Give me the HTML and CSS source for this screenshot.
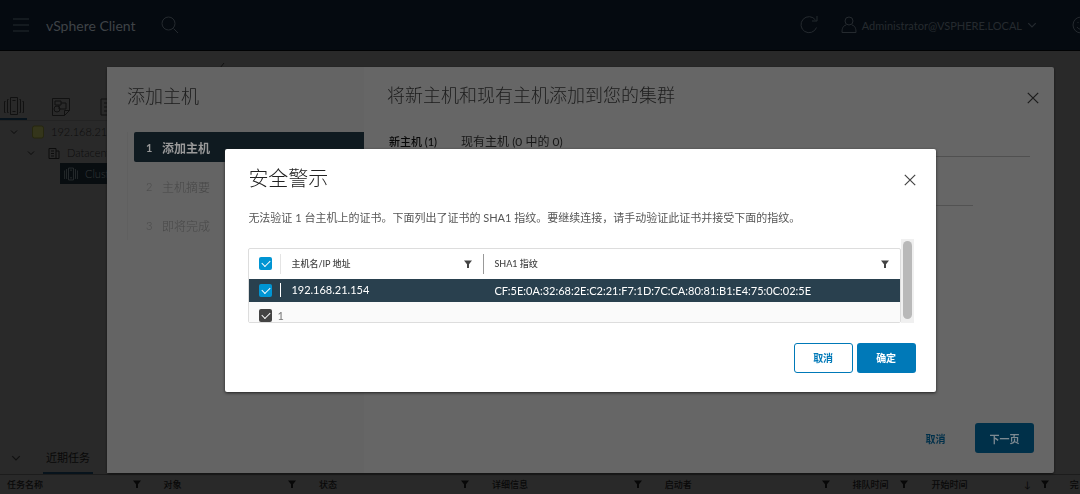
FILE: index.html
```html
<!DOCTYPE html>
<html lang="zh-CN">
<head>
  <meta charset="UTF-8">
  <meta name="viewport" content="width=device-width, initial-scale=1">
  <title>vSphere Client</title>
  <link rel="stylesheet" href="styles.css">
</head>
<body>

<svg class="sprite" aria-hidden="true">
  <symbol id="filter" viewBox="0 0 8 8"><path d="M0 0.500h8L5 4.200v3.800H3V4.200z" fill="currentColor"/></symbol>
  <symbol id="close" viewBox="0 0 12 12"><path d="M0.8 0.8l10.4 10.4M11.2 0.8L0.8 11.2"/></symbol>
  <symbol id="chevron" viewBox="0 0 8 8"><path d="M1 2.5l3 3 3-3"/></symbol>
  <symbol id="cluster" viewBox="0 0 20 20"><path d="M6.500 1.500h7v17h-7zM4.500 3.500h-1v13h1M15.500 3.500h1v13h-1M1.500 5.500h-1v11h1M18.500 5.500h1v11h-1M8.500 4.500h3M8.500 15.500h3"/></symbol>
</svg>

<div class="app">
  <header class="topbar">
    <button class="icon-btn" aria-label="菜单"><svg width="18" height="16" viewBox="0 0 18 16"><path d="M1 2h16M1 8h16M1 14h16"/></svg></button>
    <span class="brand">vSphere Client</span>
    <button class="icon-btn" aria-label="搜索"><svg width="18" height="18" viewBox="0 0 18 18"><circle cx="7.500" cy="7.500" r="6.500"/><path d="M12.500 12.500l4.500 4.500"/></svg></button>
    <div class="topbar-right">
      <button class="icon-btn" aria-label="刷新"><svg width="20" height="20" viewBox="0 0 20 20"><path d="M17.500 12.500a8 8 0 1 1-1-7.500M18 1v5h-5"/></svg></button>
      <button class="user">
        <svg width="16" height="18" viewBox="0 0 16 18"><circle cx="8" cy="5" r="4"/><path d="M5 9c-3 1-4 3-4 7.500h14C15 12 14 10 11 9"/></svg>
        Administrator@VSPHERE.LOCAL
        <svg width="10" height="10"><use href="#chevron"/></svg>
      </button>
      <button class="icon-btn smile" aria-label="反馈"><svg width="18" height="18" viewBox="0 0 18 18"><circle cx="9" cy="9" r="8"/><path d="M5 11c2 3 6 3 8 0M6 6v1M12 6v1"/></svg></button>
    </div>
  </header>

  <div class="workspace">
    <nav class="inventory">
      <div class="inv-tabs">
        <button class="inv-tab active" aria-label="主机和集群"><svg width="20" height="20"><use href="#cluster"/></svg></button>
        <button class="inv-tab" aria-label="虚拟机"><svg width="20" height="20" viewBox="0 0 20 20"><path d="M1.500 1.500h17v12l-5 5h-12zM13.500 18.500v-5h5M4 4h6v4H4zM10 6h5v6H8V8"/><circle cx="6" cy="12" r="3"/></svg></button>
        <button class="inv-tab" aria-label="存储"><svg width="20" height="20" viewBox="0 0 20 20"><path d="M3 2h14v16H3zM6 6h8M6 10h8M6 14h8"/></svg></button>
      </div>
      <ul class="tree">
        <li class="node">
          <svg width="8" height="8"><use href="#chevron"/></svg>
          <svg class="vc" width="12" height="14" viewBox="0 0 12 14"><rect x="0.500" y="1" width="11" height="12" rx="2"/></svg>
          192.168.21.1
        </li>
        <li class="node level-2">
          <svg width="8" height="8"><use href="#chevron"/></svg>
          <svg width="12" height="12" viewBox="0 0 12 12"><path d="M1 1.500h7v10H1zM8 4h3v7.500H8M3 4h3M3 6.500h3M3 9h3"/></svg>
          Datacenter
        </li>
        <li class="node level-3 selected">
          <svg width="14" height="14"><use href="#cluster"/></svg>
          Cluster
        </li>
      </ul>
    </nav>
    <div class="object-pane">
      <svg width="8" height="8" viewBox="0 0 8 8"><path d="M1 7l4-5"/></svg>
    </div>
  </div>

  <section class="tasks">
    <div class="tasks-bar">
      <svg width="10" height="10"><use href="#chevron"/></svg>
      <button class="tasks-tab">近期任务</button>
    </div>
    <table class="tasks-table">
      <colgroup>
        <col class="c-name"><col class="c-target"><col class="c-status"><col class="c-detail">
        <col class="c-user"><col class="c-queue"><col class="c-start"><col>
      </colgroup>
      <tr>
        <th><div class="th">任务名称<svg width="8" height="8"><use href="#filter"/></svg></div></th>
        <th><div class="th">对象<svg width="8" height="8"><use href="#filter"/></svg></div></th>
        <th><div class="th">状态<svg width="8" height="8"><use href="#filter"/></svg></div></th>
        <th><div class="th">详细信息<svg width="8" height="8"><use href="#filter"/></svg></div></th>
        <th><div class="th">启动者<svg width="8" height="8"><use href="#filter"/></svg></div></th>
        <th><div class="th">排队时间<svg width="8" height="8"><use href="#filter"/></svg></div></th>
        <th><div class="th">开始时间<span class="sort">↓</span><svg width="8" height="8"><use href="#filter"/></svg></div></th>
        <th><div class="th">完</div></th>
      </tr>
    </table>
  </section>
</div>

<div class="overlay">
  <div class="wizard" role="dialog" aria-labelledby="wizardTitle">
    <aside class="wizard-nav">
      <h2 id="wizardTitle">添加主机</h2>
      <ol class="steps">
        <li class="step current"><span class="num">1</span>添加主机</li>
        <li class="step"><span class="num">2</span>主机摘要</li>
        <li class="step"><span class="num">3</span>即将完成</li>
      </ol>
    </aside>
    <div class="wizard-main">
      <div class="wizard-head">
        <h2>将新主机和现有主机添加到您的集群</h2>
        <button class="close" aria-label="关闭向导"><svg width="12" height="12"><use href="#close"/></svg></button>
      </div>
      <div class="wizard-tabs">
        <button class="tab active">新主机 (1)</button>
        <button class="tab">现有主机 (0 中的 0)</button>
      </div>
      <input class="host-input" type="text" aria-label="IP 地址或 FQDN">
      <div class="wizard-footer">
        <button class="btn btn-link">取消</button>
        <button class="btn btn-next">下一页</button>
      </div>
    </div>
  </div>
</div>

<div class="overlay center">
  <div class="dialog" role="dialog" aria-labelledby="alertTitle">
    <div class="dialog-head">
      <h1 id="alertTitle">安全警示</h1>
      <button class="close" aria-label="关闭"><svg width="12" height="12"><use href="#close"/></svg></button>
    </div>
    <p>无法验证 1 台主机上的证书。下面列出了证书的 SHA1 指纹。要继续连接，请手动验证此证书并接受下面的指纹。</p>
    <div class="grid-scroll">
      <div class="grid">
        <table class="cert-table">
          <colgroup><col class="c-check"><col class="c-host"><col></colgroup>
          <thead>
            <tr>
              <th><input type="checkbox" class="check" aria-label="全选" checked></th>
              <th><div class="th split">主机名/IP 地址<svg width="8" height="8"><use href="#filter"/></svg></div></th>
              <th><div class="th split strong">SHA1 指纹<svg width="8" height="8"><use href="#filter"/></svg></div></th>
            </tr>
          </thead>
          <tbody>
            <tr>
              <td><input type="checkbox" class="check" aria-label="选择 192.168.21.154" checked></td>
              <td><div class="split bright">192.168.21.154</div></td>
              <td><div class="cell">CF:5E:0A:32:68:2E:C2:21:F7:1D:7C:CA:80:81:B1:E4:75:0C:02:5E</div></td>
            </tr>
          </tbody>
        </table>
        <label class="grid-footer"><input type="checkbox" class="check dark" checked>1</label>
      </div>
      <div class="scrollbar"><div class="thumb"></div></div>
    </div>
    <div class="dialog-footer">
      <button class="btn btn-outline">取消</button>
      <button class="btn btn-primary">确定</button>
    </div>
  </div>
</div>

</body>
</html>
```
FILE: styles.css
```css
* {
  box-sizing: border-box;
}

body {
  margin: 0;
  background: #292929;
  color: #111;
  font-family: Lato, "Noto Sans CJK SC", sans-serif;
  font-size: 11px;
  overflow: hidden;
}

h1, h2, p, ul, ol {
  margin: 0;
  padding: 0;
  font-weight: 300;
}

ul, ol {
  list-style: none;
}

button {
  margin: 0;
  padding: 0;
  border: none;
  background: none;
  color: inherit;
  font: inherit;
  cursor: pointer;
}

svg {
  display: block;
  flex: none;
  fill: none;
  stroke: currentColor;
}

.sprite {
  position: absolute;
  width: 0;
  height: 0;
}

/* application shell */
.app {
  display: flex;
  flex-direction: column;
  height: 100vh;
}

.topbar {
  display: flex;
  align-items: center;
  height: 51px;
  flex: none;
  padding-left: 12px;
  background: #050a10;
  border-bottom: 1px solid #010203;
  color: #252a2f;
}

.brand {
  margin: 0 25px 0 16px;
  color: #3f4347;
  font-size: 14px;
}

.topbar-right {
  display: flex;
  align-items: center;
  margin-left: auto;
  margin-right: -10px;
}

.user {
  display: flex;
  align-items: center;
  gap: 5px;
  margin: 0 35px 0 22px;
}

.workspace {
  display: flex;
  flex: 1;
  min-height: 0;
}

.inventory {
  width: 190px;
  padding-top: 42px;
}

.inv-tabs {
  display: flex;
  border-bottom: 1px solid #232323;
}

.inv-tab {
  width: 27px;
  height: 27px;
  margin-right: 20px;
  padding-left: 4px;
}

.inv-tab.active {
  border-bottom: 2px solid #07131c;
}

.node {
  display: flex;
  align-items: center;
  gap: 7px;
  height: 21px;
  padding-left: 10px;
  color: #0c0c0c;
}

.node .vc {
  margin-left: 7px;
  fill: #34351b;
  stroke: #26270f;
}

.level-2 {
  padding-left: 27px;
}

.level-2 svg + svg {
  margin-left: 6px;
}

.level-3 {
  margin-left: 60px;
  padding-left: 4px;
}

.selected {
  background: #080d10;
  color: #34383a;
}

.object-pane {
  flex: 1;
  padding: 10px 29px;
}

.tasks-bar {
  display: flex;
  align-items: center;
  gap: 22px;
  height: 32px;
  padding-left: 11px;
}

.tasks-tab {
  height: 32px;
  padding: 0 3px;
  border-bottom: 2px solid #07131c;
  color: #080808;
}

.tasks-table {
  width: 100%;
  table-layout: fixed;
  border-collapse: collapse;
  border-top: 1px solid #1c1c1c;
}

.tasks-table th {
  height: 20px;
  padding: 0 16px 0 7px;
  color: #080808;
  font-size: 9px;
  font-weight: 500;
  white-space: nowrap;
}

.c-name { width: 14.5%; }
.c-target { width: 14.4%; }
.c-status { width: 16%; }
.c-detail { width: 16%; }
.c-user { width: 17.4%; }
.c-queue { width: 7.3%; }
.c-start { width: 13%; }

.th {
  display: flex;
  align-items: center;
  justify-content: space-between;
}

.th svg {
  stroke: none;
}

.tasks-table th:last-child {
  padding: 0 0 0 5px;
}

.sort {
  margin: 0 10px 0 auto;
}

/* shared by both modals, which line up on the same centre */
.overlay {
  position: fixed;
  inset: 0;
  display: flex;
  padding: 67px 26px 21px 107px;
}

.center {
  align-items: center;
  justify-content: center;
}

.close svg {
  stroke-width: 1.2;
}

/* add host wizard */
.wizard {
  display: flex;
  flex: 1;
  background: #666;
  border-radius: 2px;
  box-shadow: 0 1px 2px #111;
}

.wizard h2 {
  font-size: 18px;
  line-height: 26px;
  color: #1c1c1c;
}

.wizard-nav {
  width: 257px;
  padding: 16px 0 0 20px;
  background: #646464;
}

.steps {
  display: flex;
  flex-direction: column;
  gap: 9px;
  margin-top: 23px;
  padding-left: 6px;
  border-left: 1px solid #606060;
}

.step {
  display: flex;
  align-items: center;
  height: 30px;
  padding-left: 12px;
  color: #484848;
  font-size: 12px;
}

.num {
  width: 16px;
  font-size: 11px;
}

.step.current {
  background: #0f1a20;
  border-radius: 2px 0 0 2px;
  color: #999;
  font-weight: 700;
}

.wizard-main {
  display: flex;
  flex: 1;
  flex-direction: column;
  padding: 15px 20px 20px 23px;
}

.wizard-head {
  display: flex;
  align-items: center;
  justify-content: space-between;
  height: 26px;
}

.wizard .close {
  margin: 6px -5px 0 0;
  color: #1c1c1c;
}

.wizard-tabs {
  display: flex;
  gap: 24px;
  height: 49px;
  margin-right: 4px;
  padding: 24px 2px 0;
  border-bottom: 1px solid #505050;
  align-items: flex-start;
  color: #181818;
}

.tab {
  font-size: 12px;
  line-height: 20px;
}

.tab.active {
  color: #080808;
  font-size: 11px;
  font-weight: 500;
}

.host-input {
  margin: 24px 61px 0 2px;
  height: 25px;
  border: none;
  border-bottom: 1px solid #525252;
  background: none;
}

.wizard-footer {
  display: flex;
  justify-content: flex-end;
  gap: 10px;
  margin-top: auto;
}

.btn {
  height: 30px;
  min-width: 59px;
  border-radius: 3px;
  font-size: 10px;
  font-weight: 700;
}

.btn-link {
  color: #00304a;
}

.btn-next {
  background: #003049;
  color: #7d8a92;
}

/* security alert */
.dialog {
  width: 75%;
  padding: 16px 20px 19px 23px;
  background: #fff;
  border-radius: 2px;
  box-shadow: 0 1px 3px #222;
  color: #565656;
}

.dialog-head {
  display: flex;
  align-items: center;
  justify-content: space-between;
}

h1 {
  color: #222;
  font-size: 20px;
  line-height: 26px;
}

.dialog .close {
  padding-top: 4px;
  color: #444;
}

.dialog p {
  margin-top: 17px;
  line-height: 20px;
  font-weight: 400;
}

.grid-scroll {
  display: flex;
  margin: 11px 2px 0 0;
}

.grid {
  flex: 1;
  margin-top: 9px;
  border: 1px solid #ddd;
  border-radius: 2px;
}

.cert-table {
  width: 100%;
  table-layout: fixed;
  border-collapse: collapse;
  text-align: left;
}

.c-check { width: 31px; }
.c-host { width: 203px; }

.cert-table th,
.cert-table td {
  padding: 0;
}

.cert-table th {
  height: 30px;
  color: #444;
  font-size: 9px;
  font-weight: 500;
}

.cert-table td {
  height: 23px;
  background: #29404e;
  color: #fff;
}

.cert-table th:first-child,
.cert-table td:first-child {
  padding-left: 10px;
}

.split {
  height: 20px;
  padding: 0 11px 0 10px;
  border-left: 1px solid #e4e4e4;
  line-height: 20px;
}

.strong {
  border-color: #999;
}

.bright {
  height: 14px;
  border-color: #fff;
  line-height: 14px;
}

.cell {
  padding-left: 11px;
}

.check {
  appearance: none;
  display: grid;
  place-content: center;
  width: 13px;
  height: 13px;
  margin: 0;
  border-radius: 2px;
  background: #0095d3;
}

.check::after {
  content: "";
  width: 7px;
  height: 4px;
  margin-bottom: 2px;
  border: solid #fff;
  border-width: 0 0 1px 1px;
  transform: rotate(-45deg);
}

.dark {
  background: #444;
}

.grid-footer {
  display: flex;
  align-items: flex-end;
  gap: 5px;
  height: 20px;
  padding-left: 10px;
  background: #fafafa;
  color: #777;
}

.scrollbar {
  width: 13px;
  padding: 2px;
  background: #f0f0f0;
}

.thumb {
  height: calc(100% - 2px);
  border-radius: 5px;
  background: #b9b9b9;
}

.dialog-footer {
  display: flex;
  justify-content: flex-end;
  gap: 4px;
  margin-top: 20px;
}

.btn-outline {
  border: 1px solid #0079b8;
  color: #0079b8;
}

.btn-primary {
  background: #0079b8;
  color: #fff;
}
```
